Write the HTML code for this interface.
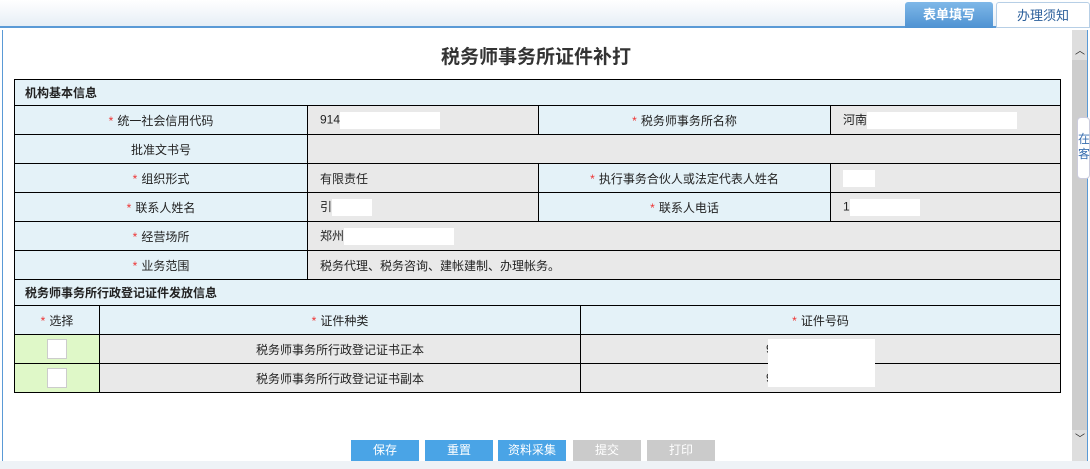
<!DOCTYPE html>
<html><head><meta charset="utf-8"><style>
*{margin:0;padding:0;box-sizing:border-box}
body{width:1090px;height:469px;overflow:hidden;background:#fff;font-family:"Liberation Sans","Noto Sans CJK SC",sans-serif;font-size:12px;color:#222;position:relative}
.top{position:absolute;left:0;top:0;width:1090px;height:28px;background:linear-gradient(#fff,#e6eef6);border-bottom:2px solid #5a9ad6}
.tab{position:absolute;top:2px;height:26px;line-height:26px;text-align:center;font-size:13px;border-radius:3px 3px 0 0}
.t1{left:905px;width:88px;background:linear-gradient(#7fb8e8,#4e92d2);color:#fff;font-weight:bold}
.t2{left:996px;width:94px;background:#fff;border:1px solid #b7cfe6;color:#2a5e9a}
.frame{position:absolute;left:2px;top:30px;width:1086px;height:431px;border-left:1px solid #5a9ad6;border-right:1px solid #5a9ad6}
.sb{position:absolute;left:1072px;top:30px;width:15px;height:431px;background:#dedede}
.sb .th{position:absolute;left:0;top:30px;width:15px;height:370px;background:#cdcdcd}
.bot{position:absolute;left:0;top:461px;width:1090px;height:8px;background:#eef2f6}
h1{position:absolute;top:42px;left:0;width:1072px;text-align:center;font-size:19px;font-weight:bold;color:#333}
table{position:absolute;border-collapse:collapse;table-layout:fixed}
td{border:1px solid #000;height:29px;text-align:center;font-size:12px}
.l{background:#e4f2f8}.v{background:#e9e9e9;text-align:left;padding-left:12px}
.h{background:#e4f2f8;text-align:left;padding-left:10px;font-weight:bold;height:26px}
.s{color:#e33;margin-right:4px}
.w{display:inline-block;background:#fff;height:17px;vertical-align:middle}
.btn{position:absolute;top:440px;width:68px;height:21px;line-height:21px;text-align:center;color:#fff;font-size:12px}
.bl{background:#4aa4e6}.gr{background:#cbcbcb}
.cb{display:inline-block;width:20px;height:20px;background:#fff;border:1px solid #ccc;vertical-align:middle}
</style></head><body>
<div class="top"><div class="tab t1">表单填写</div><div class="tab t2">办理须知</div></div>
<div class="frame"></div>
<div class="sb"><div class="th"></div><div style="position:absolute;top:12px;left:3px;font-size:10px">︿</div><div style="position:absolute;top:400px;left:3px;font-size:10px">﹀</div></div>
<div style="position:absolute;left:1077px;top:117px;width:13px;height:62px;background:#fff;border:1px solid #ccd;border-radius:4px;font-size:12px;color:#3a6fb0;padding-top:14px;line-height:15px">在<br>客</div>
<div class="bot"></div>
<h1>税务师事务所证件补打</h1>
<table style="left:14px;top:79px;width:1046px">
<colgroup><col style="width:293px"><col style="width:231px"><col style="width:292px"><col style="width:230px"></colgroup>
<tr><td colspan="4" class="h">机构基本信息</td></tr>
<tr><td class="l"><span class="s">*</span>统一社会信用代码</td><td class="v">914<span class="w" style="width:100px"></span></td><td class="l"><span class="s">*</span>税务师事务所名称</td><td class="v">河南<span class="w" style="width:150px"></span></td></tr>
<tr><td class="l">批准文书号</td><td class="v" colspan="3"></td></tr>
<tr><td class="l"><span class="s">*</span>组织形式</td><td class="v">有限责任</td><td class="l"><span class="s">*</span>执行事务合伙人或法定代表人姓名</td><td class="v"><span class="w" style="width:32px"></span></td></tr>
<tr><td class="l"><span class="s">*</span>联系人姓名</td><td class="v">引<span class="w" style="width:40px"></span></td><td class="l"><span class="s">*</span>联系人电话</td><td class="v">1<span class="w" style="width:70px"></span></td></tr>
<tr><td class="l"><span class="s">*</span>经营场所</td><td class="v" colspan="3">郑州<span class="w" style="width:110px"></span></td></tr>
<tr><td class="l"><span class="s">*</span>业务范围</td><td class="v" colspan="3">税务代理、税务咨询、建帐建制、办理帐务。</td></tr>
<tr><td colspan="4" class="h">税务师事务所行政登记证件发放信息</td></tr>
</table>
<table style="left:14px;top:305px;width:1046px">
<colgroup><col style="width:85px"><col style="width:481px"><col style="width:480px"></colgroup>
<tr><td class="l"><span class="s">*</span>选择</td><td class="l"><span class="s">*</span>证件种类</td><td class="l"><span class="s">*</span>证件号码</td></tr>
<tr><td style="background:#dff8c8"><span class="cb"></span></td><td class="v" style="text-align:center;padding:0">税务师事务所行政登记证书正本</td><td class="v" style="padding-left:185px">9</td></tr>
<tr><td style="background:#dff8c8"><span class="cb"></span></td><td class="v" style="text-align:center;padding:0">税务师事务所行政登记证书副本</td><td class="v" style="padding-left:185px">9</td></tr>
</table>
<div style="position:absolute;left:768px;top:339px;width:107px;height:48px;background:#fff"></div>
<div class="btn bl" style="left:351px">保存</div>
<div class="btn bl" style="left:425px">重置</div>
<div class="btn bl" style="left:498px">资料采集</div>
<div class="btn gr" style="left:573px">提交</div>
<div class="btn gr" style="left:647px">打印</div>
</body></html>
